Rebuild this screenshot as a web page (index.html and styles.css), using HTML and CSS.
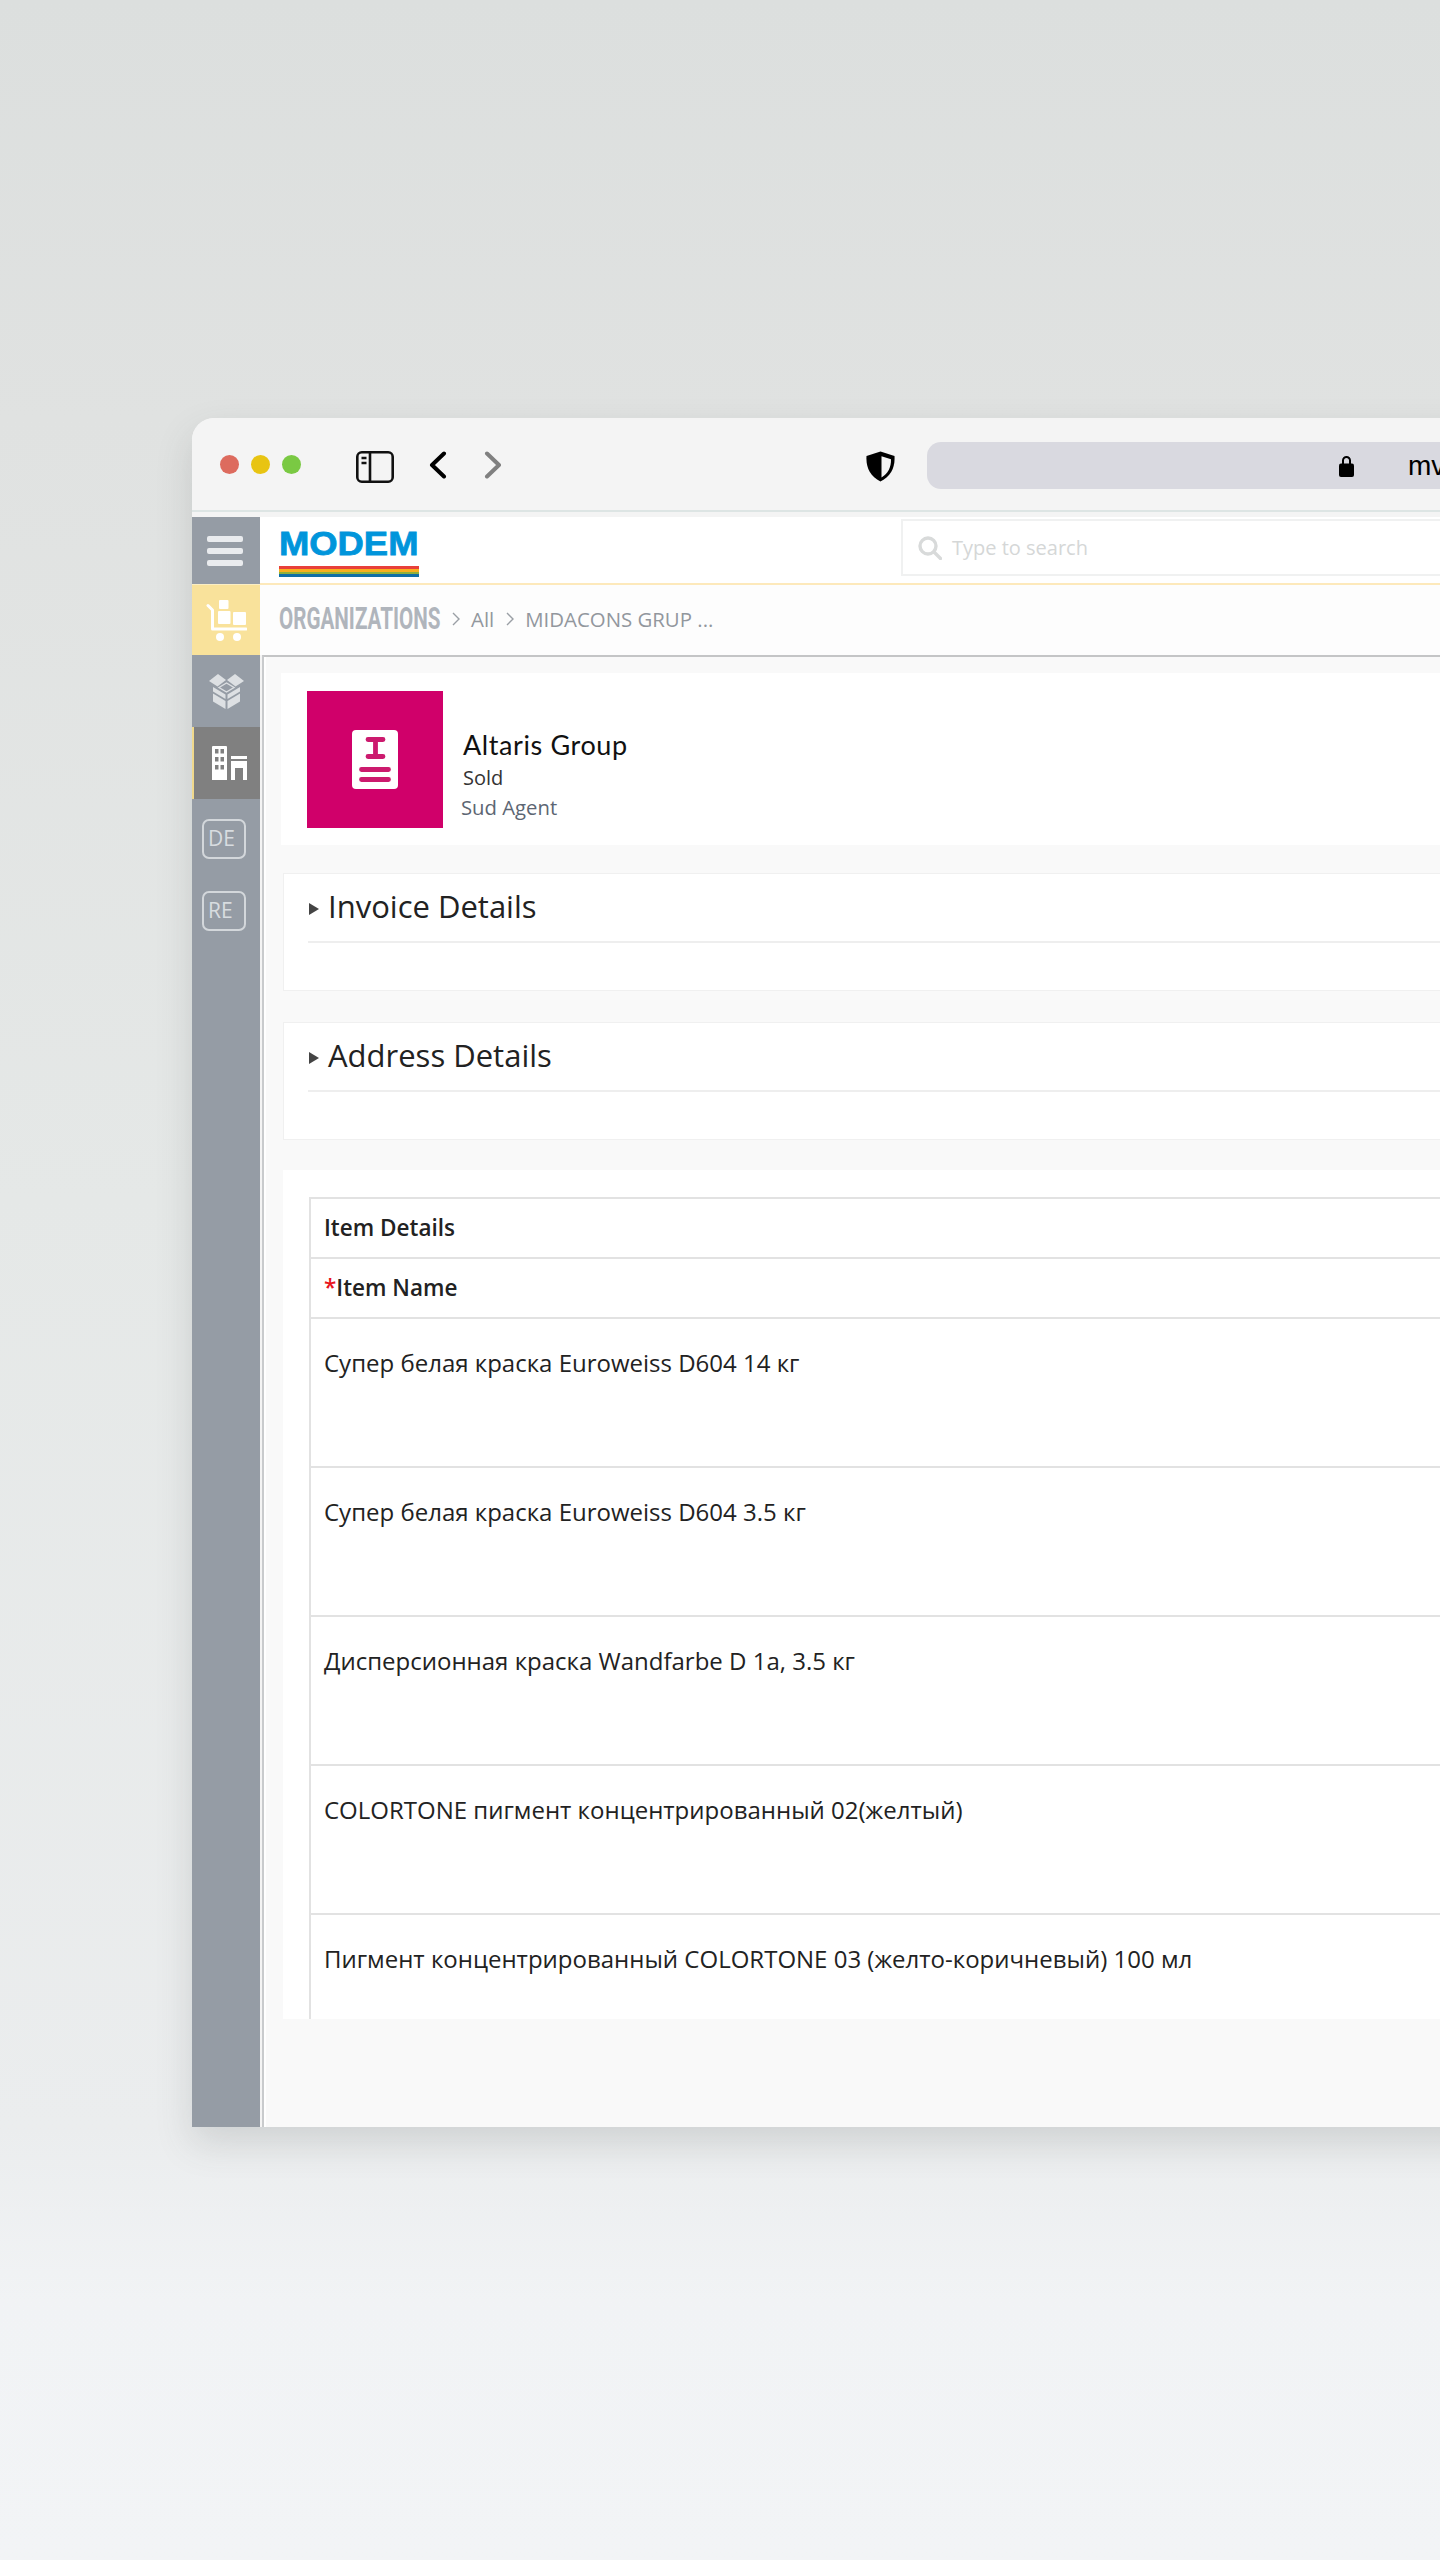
FILE: index.html
```html
<!DOCTYPE html>
<html lang="en">
<head>
<meta charset="utf-8">
<title>Modem</title>
<link rel="stylesheet" href="styles.css">
</head>
<body>
<div class="window">
  <div class="chrome">
    <div class="lights"><span class="light red"></span><span class="light yellow"></span><span class="light green"></span></div>
    <svg class="ic-sidebar" viewBox="0 0 38 32"><rect x="1.3" y="1.3" width="35.4" height="29.4" rx="4.5" fill="none" stroke="#111" stroke-width="2.6"/><path d="M14 1v30" stroke="#111" stroke-width="2.6"/><path d="M5.5 7h5M5.5 12h5" stroke="#111" stroke-width="2.6"/></svg>
    <svg class="ic-back" viewBox="0 0 18 28"><path d="M15 2.5 3 14l12 11.5" fill="none" stroke="#000" stroke-width="4" stroke-linecap="round" stroke-linejoin="round"/></svg>
    <svg class="ic-forward" viewBox="0 0 18 28"><path d="M3 2.5 15 14 3 25.5" fill="none" stroke="#808080" stroke-width="4" stroke-linecap="round" stroke-linejoin="round"/></svg>
    <svg class="ic-shield" viewBox="0 0 29 31"><path d="M14.5 0.5 28.5 5c.8 11-3.5 20.5-14 25.5C4 25.500-.3 16 .5 5Z" fill="#000"/><path d="M15.500 5.200 25 8.200c.2 7.800-2.700 14-9.500 18.200Z" fill="#f4f4f4"/></svg>
    <div class="address">
      <svg class="ic-lock" viewBox="0 0 15 22"><path d="M4 10V5.500a3.500 3.500 0 0 1 7 0V10" fill="none" stroke="#000" stroke-width="2"/><rect x="0" y="8.500" width="15" height="13.500" rx="2" fill="#000"/></svg>
      <span class="url">mv</span>
    </div>
  </div>
  <div class="app">
    <nav class="sidebar">
      <div class="cell cell-menu"><span class="bar"></span><span class="bar"></span><span class="bar"></span></div>
      <div class="cell cell-cart">
        <svg class="ic-cart" viewBox="0 0 41 41" fill="#fff"><rect x="13" y="0" width="9.500" height="9" rx="1"/><rect x="12" y="11" width="12.500" height="13" rx="1"/><rect x="27" y="12" width="13" height="13" rx="1"/><path d="M2 5.500 6.500 10v19H40" fill="none" stroke="#fff" stroke-width="3" stroke-linecap="round" stroke-linejoin="round"/><circle cx="14" cy="37" r="4"/><circle cx="31" cy="37" r="4"/></svg>
      </div>
      <div class="cell cell-box">
        <svg class="ic-box" viewBox="0 0 35 35" fill="#dde0e3"><path d="M9 0 17 6 8.500 12.500 0 7Z"/><path d="M26 0 18 6 26.500 12.500 35 7Z"/><path d="M10 13.500 17.500 9 25 13.500 17.500 18Z" fill="none" stroke="#dde0e3" stroke-width="1.400"/><path d="M4 13 16.500 20.500v4.500L4 17.500Z"/><path d="M31 13 18.500 20.500v4.500L31 17.500Z"/><path d="M4 19.500 16.500 27v8L4 27.500Z"/><path d="M31 19.500 18.500 27v8L31 27.500Z"/></svg>
      </div>
      <div class="cell cell-active">
        <svg class="ic-building" viewBox="0 0 35 34"><path fill="#fff" fill-rule="evenodd" d="M1 0H14a1 1 0 0 1 1 1V34H0V1A1 1 0 0 1 1 0ZM3 3v4.500h3.500V3ZM8.500 3v4.500H12V3ZM3 11v4.500h3.500V11ZM8.500 11v4.500H12V11ZM3 19v4.500h3.500V19ZM8.500 19v4.500H12V19Z"/><path fill="#fff" d="M19 10h16v3H19Z"/><path fill="#fff" d="M19 15h16v19h-4V22h-8v12h-4Z"/></svg>
      </div>
      <div class="badge badge-de">DE</div>
      <div class="badge badge-re">RE</div>
    </nav>
    <div class="main">
      <header class="topbar">
        <div class="logo">
          <span class="logo-text">MODEM</span>
          <span class="stripes"><i class="s1"></i><i class="s2"></i><i class="s3"></i><i class="s4"></i></span>
        </div>
        <div class="search">
          <svg class="ic-search" viewBox="0 0 24 24"><circle cx="10" cy="10" r="8" fill="none" stroke="#d8dada" stroke-width="3.400"/><path d="m16 16 6.500 6.500" stroke="#d8dada" stroke-width="3.400" stroke-linecap="round"/></svg>
          <span class="search-text">Type to search</span>
        </div>
      </header>
      <div class="crumbs">
        <span class="crumb-title"><span class="crumb-title-inner">ORGANIZATIONS</span></span>
        <svg class="crumb-sep" viewBox="0 0 8 14"><path d="m1 1 6 6-6 6" fill="none" stroke="#9a9fa5" stroke-width="1.400"/></svg>
        <span class="crumb">All</span>
        <svg class="crumb-sep" viewBox="0 0 8 14"><path d="m1 1 6 6-6 6" fill="none" stroke="#9a9fa5" stroke-width="1.400"/></svg>
        <span class="crumb">MIDACONS GRUP ...</span>
      </div>
      <main class="content">
        <section class="profile">
          <div class="avatar">
            <svg class="ic-doc" viewBox="0 0 46 59"><rect width="46" height="59" rx="4" fill="#fff"/><path d="M16 9.500h15M23.500 9.500v17M16 26.500h15" stroke="#cc1a6e" stroke-width="4.800" stroke-linecap="round"/><path d="M9.500 39.500h27M9.500 49.500h27" stroke="#cc1a6e" stroke-width="4.800" stroke-linecap="round"/></svg>
          </div>
          <div class="profile-info">
            <div class="name">Altaris Group</div>
            <div class="status">Sold</div>
            <div class="agent">Sud Agent</div>
          </div>
        </section>
        <section class="panel panel-invoice">
          <h2 class="panel-title"><span class="tri"></span>Invoice Details</h2>
        </section>
        <section class="panel panel-address">
          <h2 class="panel-title"><span class="tri"></span>Address Details</h2>
        </section>
        <section class="items">
          <div class="table">
            <div class="row row-head">Item Details</div>
            <div class="row row-head"><span class="req">*</span>Item Name</div>
            <div class="row row-item">Супер белая краска Euroweiss D604 14 кг</div>
            <div class="row row-item">Супер белая краска Euroweiss D604 3.5 кг</div>
            <div class="row row-item">Дисперсионная краска Wandfarbe D 1a, 3.5 кг</div>
            <div class="row row-item">COLORTONE пигмент концентрированный 02(желтый)</div>
            <div class="row row-item">Пигмент концентрированный COLORTONE 03 (желто-коричневый) 100 мл</div>
          </div>
        </section>
      </main>
    </div>
  </div>
</div>
</body>
</html>
```
FILE: styles.css
```css
* { box-sizing: border-box; }
html, body { margin: 0; height: 2560px; overflow: hidden; }
body {
  padding: 418px 0 0 192px;
  background: linear-gradient(180deg, #dcdfde 0, #e0e2e1 420px, #e5e8e7 1200px, #ebedee 2130px, #f1f3f5 2300px, #f2f4f6 2560px);
  font-family: "Open Sans", "Noto Sans", sans-serif;
  color: #222;
}
.window {
  width: 1300px;
  height: 1709px;
  border-radius: 22px 22px 0 0;
  box-shadow: 0 16px 36px rgba(70, 75, 80, 0.17);
  background: #f4f4f4;
  display: flex;
  flex-direction: column;
}
.chrome {
  flex: none;
  height: 99px;
  padding-top: 24px;
  border-radius: 22px 22px 0 0;
  background: #f4f4f4;
  display: flex;
  align-items: flex-start;
  position: relative;
  overflow: hidden;
}
.chrome > * { flex: none; }
.chrome::after {
  content: "";
  position: absolute;
  left: 0; right: 0; top: 92px;
  height: 2px;
  background: #dde5e4;
}
.lights { display: flex; gap: 12px; margin: 13px 0 0 28px; }
.light { width: 19px; height: 19px; border-radius: 50%; }
.red { background: #dd6b5e; }
.yellow { background: #e8c412; }
.green { background: #7ac943; }
.ic-sidebar { width: 38px; height: 32px; margin: 9px 0 0 55px; }
.ic-back { width: 18px; height: 28px; margin: 9px 0 0 35px; }
.ic-forward { width: 18px; height: 28px; margin: 9px 0 0 37px; }
.ic-shield { width: 29px; height: 31px; margin: 9px 0 0 364px; }
.address {
  width: 600px;
  height: 47px;
  margin-left: 32px;
  border-radius: 14px 0 0 14px;
  background: #d9d9e0;
  display: flex;
  align-items: center;
  padding-left: 412px;
}
.ic-lock { width: 15px; height: 22px; flex: none; }
.url { margin-left: 54px; font: 28px/47px "Liberation Sans", sans-serif; color: #000; }

.app { flex: 1; min-height: 0; display: flex; }
.sidebar {
  flex: none;
  width: 68px;
  background: #959ca5;
  display: flex;
  flex-direction: column;
}
.cell { display: flex; align-items: center; justify-content: center; }
.cell-menu { height: 67px; flex-direction: column; gap: 6px; padding-right: 3px; }
.bar { width: 36px; height: 6px; border-radius: 2px; background: #e9ebee; }
.cell-cart { height: 71px; background: #f9e29b; border-top: 1px solid #fbeec4; }
.ic-cart { width: 41px; height: 41px; }
.cell-box { height: 72px; }
.ic-box { width: 35px; height: 35px; }
.cell-active { height: 72px; background: #808080; border-left: 2px solid #f0d98c; }
.ic-building { width: 35px; height: 34px; margin-left: 5px; }
.badge {
  width: 44px;
  height: 40px;
  margin-left: 10px;
  border: 2px solid #d3d7db;
  border-radius: 7px;
  padding-left: 4px;
  font-size: 21px;
  line-height: 35px;
  color: #d8dce0;
}
.badge-de { margin-top: 20px; }
.badge-re { margin-top: 32px; }

.main {
  flex: 1;
  min-width: 0;
  display: flex;
  flex-direction: column;
}
.topbar {
  flex: none;
  height: 68px;
  background: #fff;
  border-bottom: 2px solid #fde9bb;
  display: flex;
}
.logo { width: 641px; flex: none; padding: 9px 0 0 19px; display: flex; flex-direction: column; }
.logo-text {
  font: 900 34px/34px "Liberation Sans", sans-serif;
  color: #0095db;
  -webkit-text-stroke: 0.8px #0095db;
  height: 40px;
  transform: scaleX(1.07);
  transform-origin: left center;
}
.stripes { width: 140px; height: 11px; display: flex; flex-direction: column; }
.stripes i { display: block; flex: 1; }
.s1 { background: #e8403a; }
.s2 { background: #f7b01e; }
.s3 { background: #8fb03c; }
.s4 { background: #0f6ea6; }
.search {
  width: 700px;
  flex: none;
  height: 57px;
  margin-top: 2px;
  border: 2px solid #f0f1f1;
  border-right: 0;
  display: flex;
  align-items: center;
  padding-left: 15px;
}
.ic-search { width: 24px; height: 24px; flex: none; }
.search-text { margin-left: 10px; font-size: 20px; color: #d5d7d7; }
.crumbs {
  flex: none;
  height: 70px;
  padding: 0 0 2px 19px;
  background: #fdfdfd;
  display: flex;
  align-items: center;
  color: #92979d;
  font-size: 20.4px;
}
.crumb-title { width: 161px; height: 40px; white-space: nowrap; }
.crumb-title-inner {
  display: inline-block;
  font: 700 31px/40px "Roboto", sans-serif;
  color: #b0b5bc;
  transform: scaleX(0.665);
  transform-origin: left center;
}
.crumb-sep { width: 8px; height: 14px; margin: 0 11px 0 12px; }
.content {
  flex: 1;
  min-height: 0;
  background: #f9f9f9;
  border-top: 2px solid #c4c5c6;
  border-left: 2px solid #c9cbcd;
  margin-left: 2px;
  padding: 16px 0 0 17px;
  box-shadow: inset 2px 0 0 #fff;
}
.profile {
  height: 172px;
  padding: 18px 0 0 26px;
  background: #fff;
  display: flex;
  gap: 20px;
}
.avatar {
  width: 136px;
  height: 137px;
  background: #d0006a;
  display: flex;
  align-items: center;
  justify-content: center;
}
.ic-doc { width: 46px; height: 59px; }
.profile-info { padding-top: 35px; }
.name { font: 400 27px/37px "Lato", sans-serif; color: #111; letter-spacing: 0.6px; }
.status { font-size: 20px; line-height: 30px; color: #333; }
.agent { font-size: 20.3px; line-height: 28px; margin-left: -2px; color: #5c6673; }
.panel {
  height: 118px;
  margin-left: 2px;
  background: #fff;
  border: 1px solid #f0f0f0;
  border-width: 1px 0 1px 1px;
  padding: 0 0 0 24px;
}
.panel-invoice { margin-top: 28px; }
.panel-address { margin-top: 31px; }
.panel-title {
  margin: 0;
  height: 69px;
  border-bottom: 2px solid #eeeeee;
  display: flex;
  align-items: center;
  font-size: 31px;
  font-weight: 400;
  color: #222;
  padding-bottom: 4px;
}
.tri {
  width: 0; height: 0;
  margin: 6px 9px 0 1px;
  border-left: 10px solid #444;
  border-top: 6px solid transparent;
  border-bottom: 6px solid transparent;
}
.items {
  height: 849px;
  margin: 30px 0 0 2px;
  padding: 27px 0 0 26px;
  background: #fff;
  overflow: hidden;
}
.table { border: 2px solid #e2e2e2; border-width: 2px 0 0 2px; }
.row { padding-left: 13px; border-bottom: 2px solid #e2e2e2; white-space: nowrap; }
.row-head { height: 60px; font-size: 22.5px; font-weight: 600; line-height: 57px; color: #222; }
.req { color: #e8141c; }
.row-item { height: 149px; font-size: 24px; line-height: 32px; padding-top: 28px; color: #222; }
```
